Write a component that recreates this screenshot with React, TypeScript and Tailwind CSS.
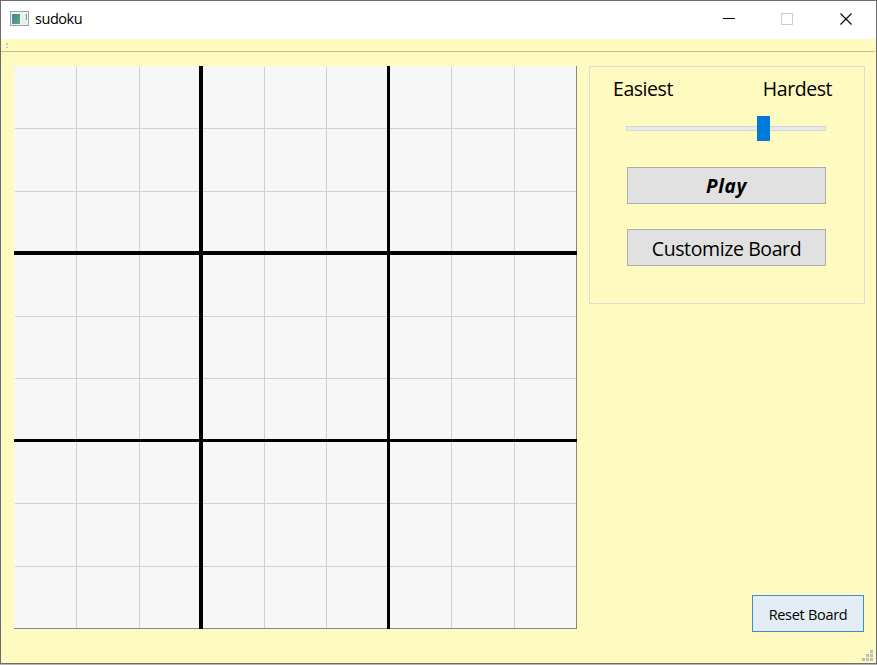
import React from "react";

const TRACKS = [62, 1, 62, 1, 59, 4, 61, 1, 61, 1, 60, 3, 61, 1, 62, 1, 61, 1];
const TEMPLATE = TRACKS.map((t) => t + "px").join(" ");
const THIN = [2, 4, 8, 10, 14, 16];
const THICK = [6, 12];

function Board() {
  return (
    <div
      className="grid h-[563px] w-[563px] shrink-0 bg-[#f7f7f7]"
      style={{ gridTemplateColumns: TEMPLATE, gridTemplateRows: TEMPLATE }}
    >
      {THIN.map((n) => (
        <React.Fragment key={n}>
          <div className="mt-px bg-[#d0d0d0]" style={{ gridColumn: n, gridRow: "1 / -1" }} />
          <div className="ml-px bg-[#d0d0d0]" style={{ gridRow: n, gridColumn: "1 / -1" }} />
        </React.Fragment>
      ))}
      <div className="bg-[#828790]" style={{ gridColumn: 18, gridRow: "1 / -1" }} />
      <div className="bg-[#828790]" style={{ gridRow: 18, gridColumn: "1 / -1" }} />
      {THICK.map((n) => (
        <React.Fragment key={n}>
          <div className="bg-black" style={{ gridColumn: n, gridRow: "1 / -1" }} />
          <div className="bg-black" style={{ gridRow: n, gridColumn: "1 / -1" }} />
        </React.Fragment>
      ))}
    </div>
  );
}

function TitleBar() {
  return (
    <header className="flex h-[38px] shrink-0 items-start bg-white">
      <svg className="ml-[9px] mt-[10px]" width="19" height="16" viewBox="0 0 19 16" shapeRendering="crispEdges">
        <defs>
          <linearGradient id="pane" x1="0" y1="0" x2="1" y2="1">
            <stop offset="0" stopColor="#4a7fa0" />
            <stop offset="1" stopColor="#58b070" />
          </linearGradient>
        </defs>
        <rect x="0.5" y="0.5" width="18" height="14" fill="#f2f4f4" stroke="#9ca3a8" />
        <rect x="2" y="3" width="8" height="10" fill="url(#pane)" />
        <rect x="11" y="3" width="5" height="10" fill="#e9eded" />
        <rect x="16" y="3" width="1" height="6" fill="#5ba283" />
      </svg>
      <span className="ml-[6px] mt-[8px] text-[14.5px] leading-5 tracking-[-0.45px]">sudoku</span>
      <svg className="ml-auto mr-[23px] mt-[12px]" width="130" height="13" viewBox="0 0 130 13" fill="none">
        <path d="M0 5.5H12" stroke="#000" />
        <rect x="58.5" y="0.5" width="11" height="11" stroke="#ccc" />
        <path d="M117.5 .5l11 11M128.5 .5l-11 11" stroke="#000" strokeWidth="1.1" />
      </svg>
    </header>
  );
}

export default function App() {
  return (
    <div className="flex h-[665px] w-[877px] flex-col bg-[#b5b5b5] font-['Open_Sans','Noto_Sans',sans-serif] text-black">
      <div className="flex h-[664px] flex-col border border-[#6c6c70] bg-[#fffabf]">
        <TitleBar />
        <div className="mr-px flex h-[13px] shrink-0 flex-col gap-[2px] border-b border-[#c3be90] pl-[5px] pt-[4px]">
          <i className="h-[2px] w-[2px] bg-[#d0cdac]" />
          <i className="h-px w-[2px] bg-[#c0bea0]" />
        </div>
        <main className="flex grow pl-[13px] pr-[11px] pt-[14px]">
          <Board />
          <div className="ml-[12px] flex w-[276px] flex-col">
            <section className="flex h-[238px] w-[276px] flex-col border border-[#dcdcdc]">
              <div className="ml-[23px] mr-[32px] mt-[8px] flex justify-between text-[19.5px] leading-7">
                <span className="tracking-[-0.45px]">Easiest</span>
                <span className="tracking-[-0.45px]">Hardest</span>
              </div>
              <div className="ml-[36px] mt-[13px] flex h-[25px] w-[200px] items-center">
                <div className="h-[5px] w-[131px] border border-r-0 border-[#d6d6d6] bg-[#e7eaea]" />
                <div className="h-[25px] w-[13px] bg-[#007ad9]" />
                <div className="h-[5px] grow border border-l-0 border-[#d6d6d6] bg-[#e7eaea]" />
              </div>
              <button className="ml-[37px] mt-[26px] h-[37px] w-[199px] border border-[#adadad] bg-[#e1e1e1] font-['Noto_Sans','Open_Sans',sans-serif] text-[19px] font-bold italic leading-[37px] tracking-[0.6px]">
                Play
              </button>
              <button className="ml-[37px] mt-[25px] h-[37px] w-[199px] whitespace-nowrap border border-[#adadad] bg-[#e1e1e1] text-[19.5px] leading-[37px] tracking-[-0.4px]">
                Customize Board
              </button>
            </section>
            <button className="ml-[163px] mt-[291px] h-[37px] w-[112px] whitespace-nowrap border border-[#3c8fc8] bg-[#e4ecf6] text-[14.5px] leading-[37px] tracking-[-0.3px]">
              Reset Board
            </button>
          </div>
        </main>
        <svg className="mb-[2px] ml-auto mr-[3px] shrink-0" width="11" height="11" fill="#bdbdbd" shapeRendering="crispEdges">
          <path d="M8 0h3v3h-3zM4 4h3v3h-3zM8 4h3v3h-3zM0 8h3v3h-3zM4 8h3v3h-3zM8 8h3v3h-3z" />
        </svg>
      </div>
    </div>
  );
}
